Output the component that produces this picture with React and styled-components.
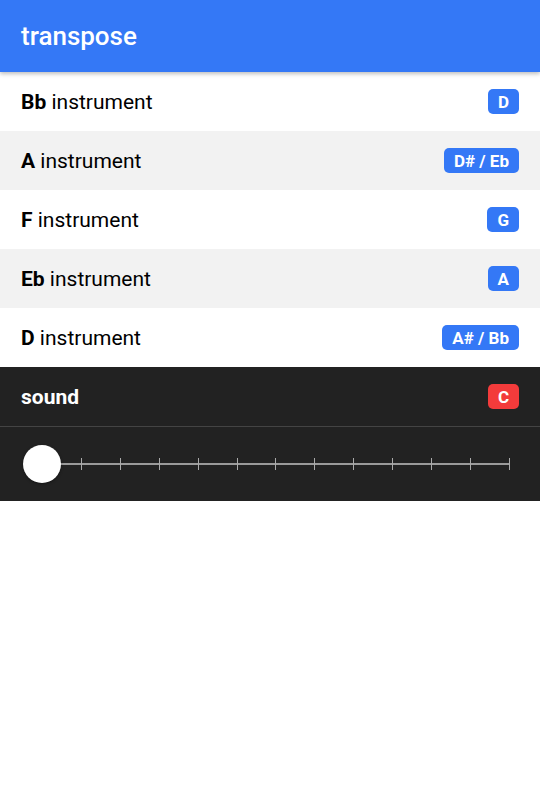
import styled, { createGlobalStyle } from "styled-components";

const Global = createGlobalStyle`
  body {
    margin: 0;
    background: #ffffff;
    font-family: Roboto, "Liberation Sans", sans-serif;
  }
`;

const rows = [
  { key: "Bb", note: "D" },
  { key: "A", note: "D# / Eb" },
  { key: "F", note: "G" },
  { key: "Eb", note: "A" },
  { key: "D", note: "A# / Bb" },
];

function App() {
  const steps = 12;
  return (
    <Page>
      <Global />
      <Header>transpose</Header>
      <List>
        {rows.map((r, i) => (
          <Row key={r.key} $alt={i % 2 === 1}>
            <Label>
              <b>{r.key}</b> instrument
            </Label>
            <Badge>{r.note}</Badge>
          </Row>
        ))}
      </List>
      <Sound>
        <SoundRow>
          <SoundLabel>sound</SoundLabel>
          <Badge $red>C</Badge>
        </SoundRow>
        <SliderBox>
          <Track>
            {Array.from({ length: steps + 1 }).map((_, i) => (
              <Tick key={i} $hidden={i === 0} />
            ))}
            <Thumb />
          </Track>
        </SliderBox>
      </Sound>
    </Page>
  );
}

const Page = styled.div`
  width: 540px;
  min-height: 800px;
  background: #fff;
`;

const Header = styled.header`
  position: relative;
  z-index: 1;
  height: 72px;
  display: flex;
  align-items: center;
  padding: 0 21px;
  background: #3478f6;
  color: #fff;
  font-size: 26px;
  font-weight: 500;
  box-shadow: 0 2px 4px rgba(0, 0, 0, 0.25);
`;

const List = styled.div`
  display: flex;
  flex-direction: column;
`;

const Row = styled.div`
  height: 59px;
  display: flex;
  align-items: center;
  justify-content: space-between;
  padding: 0 21px;
  background: ${(p) => (p.$alt ? "#f2f2f2" : "#ffffff")};
`;

const Label = styled.span`
  font-size: 21px;
  color: #000;
  b {
    font-weight: 700;
  }
`;

const Badge = styled.span`
  height: 25px;
  display: inline-flex;
  align-items: center;
  padding: 0 10px;
  border-radius: 5px;
  background: ${(p) => (p.$red ? "#f33b3b" : "#3478f6")};
  color: #fff;
  font-size: 17px;
  font-weight: 700;
`;

const Sound = styled.section`
  background: #222222;
`;

const SoundRow = styled.div`
  height: 59px;
  display: flex;
  align-items: center;
  justify-content: space-between;
  padding: 0 21px;
  border-bottom: 1px solid #444;
`;

const SoundLabel = styled.span`
  color: #fff;
  font-size: 21px;
  font-weight: 700;
`;

const SliderBox = styled.div`
  height: 74px;
  display: flex;
  align-items: center;
  padding: 0 30px 0 42px;
`;

const Track = styled.div`
  position: relative;
  flex: 1;
  height: 12px;
  display: flex;
  align-items: center;
  justify-content: space-between;
  &::before {
    content: "";
    position: absolute;
    left: 0;
    right: 0;
    top: 5px;
    height: 2px;
    background: #9a9a9a;
  }
`;

const Tick = styled.span`
  position: relative;
  width: 1px;
  height: 12px;
  background: ${(p) => (p.$hidden ? "transparent" : "#aaaaaa")};
`;

const Thumb = styled.span`
  position: absolute;
  left: -19px;
  top: -13px;
  width: 38px;
  height: 38px;
  border-radius: 50%;
  background: #fff;
  box-shadow: 0 1px 3px rgba(0, 0, 0, 0.4);
`;

export default App;
